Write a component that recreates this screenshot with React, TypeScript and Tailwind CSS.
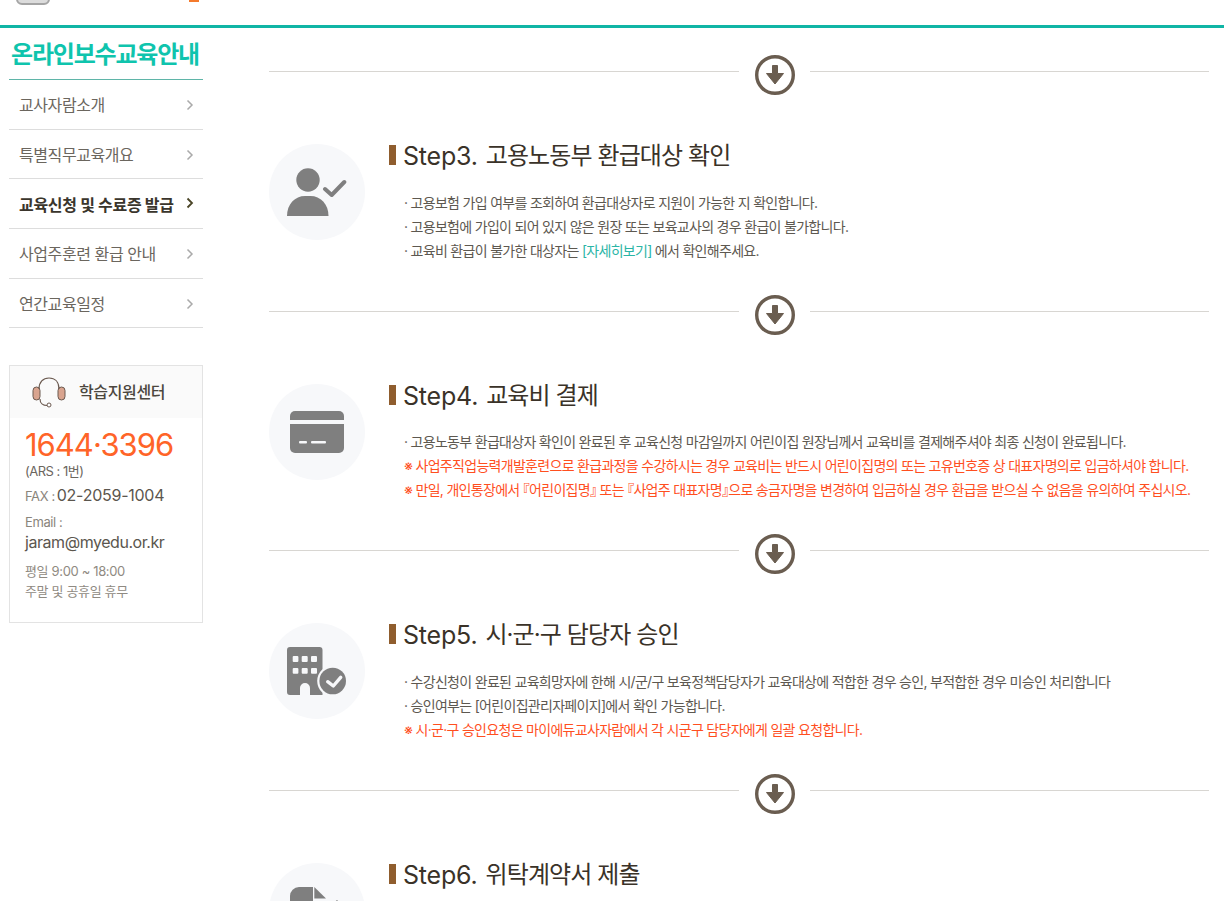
const FONT = "font-['Inter','Noto_Sans_CJK_KR',sans-serif]";

const MENU = [
  { label: '교사자람소개' },
  { label: '특별직무교육개요' },
  { label: '교육신청 및 수료증 발급', active: true },
  { label: '사업주훈련 환급 안내' },
  { label: '연간교육일정' },
];

function Chevron({ active }: { active?: boolean }) {
  return (
    <svg className={active ? 'mb-[3px] h-[12px] w-[8px]' : 'h-[12px] w-[8px]'} viewBox="0 0 8 12" fill="none" stroke={active ? '#4a4426' : '#aaaaaa'} strokeWidth={active ? 1.8 : 1.5}>
      <path d="M1.5 1.500 6 6l-4.500 4.500" />
    </svg>
  );
}

function Sidebar() {
  return (
    <aside className="w-[194px] shrink-0">
      <h2 className="h-[52px] pt-[10px] pr-[2px] text-center text-[24px] leading-[34px] font-bold tracking-[-1.2px] whitespace-nowrap text-[#0fc4ad] border-b border-[#5fb5a8]">
        온라인보수교육안내
      </h2>
      <ul>
        {MENU.map((m) => (
          <li key={m.label} className="flex h-[49.7px] items-center justify-between border-b border-[#dddddd] pt-[2px] pr-[9px] pl-[10px]">
            <span className={m.active ? 'text-[16px] font-bold tracking-[-0.3px] text-[#3a352c]' : 'text-[16px] tracking-[-0.42px] text-[#6b665e]'}>{m.label}</span>
            <Chevron active={m.active} />
          </li>
        ))}
      </ul>
      <div className="mt-[37px] h-[258px] border border-[#e3e3e3]">
        <div className="flex h-[52px] items-center bg-[#fafafa] pl-[22px]">
          <svg className="h-[32px] w-[34px]" viewBox="0 0 34 32" fill="none">
            <rect x="1" y="11" width="7" height="13" rx="3.500" fill="#d9a48f" stroke="#6b5a50" />
            <rect x="26" y="11" width="7" height="13" rx="3.500" fill="#d9a48f" stroke="#6b5a50" />
            <path d="M7 13C7 6 11 2 17 2s10 4 10 11M8 23c0 4 3 6.500 7 6.500" stroke="#6b5a50" strokeWidth="1.200" />
            <circle cx="17" cy="29" r="2" fill="#fff" stroke="#6b5a50" />
          </svg>
          <span className="ml-[13px] text-[16px] font-medium tracking-[-0.35px] text-[#4b463e]">학습지원센터</span>
        </div>
        <div className="pl-[15px]">
          <p className="mt-[10px] text-[31px] leading-[34px] tracking-[-1px] text-[#ff6428]">1644·3396</p>
          <p className="text-[13px] leading-[19px] tracking-[-0.5px] text-[#6b665e]">(ARS : 1번)</p>
          <p className="mt-[2px] flex items-baseline text-[13px] leading-[24px] tracking-[-0.4px] text-[#8a857c]">
            FAX :<span className="ml-[2px] text-[16px] tracking-[-0.25px] text-[#5b564e]">02-2059-1004</span>
          </p>
          <p className="mt-[5px] text-[13px] leading-[19px] tracking-[-0.4px] text-[#8a857c]">Email :</p>
          <p className="text-[16px] leading-[20px] tracking-[-0.45px] text-[#5b564e]">jaram@myedu.or.kr</p>
          <p className="mt-[9px] text-[13px] leading-[20px] tracking-[-0.35px] text-[#8f8a82]">평일 9:00 ~ 18:00</p>
          <p className="text-[13px] leading-[20px] tracking-[-0.35px] text-[#8f8a82]">주말 및 공휴일 휴무</p>
        </div>
      </div>
    </aside>
  );
}

function Divider() {
  return (
    <div className="flex h-[40px] items-start">
      <span className="mt-[16px] h-px w-[470px] bg-[#d8d6d2]" />
      <svg className="mr-[15px] ml-[16px] h-[40px] w-[40px] shrink-0" viewBox="0 0 40 40">
        <circle cx="20" cy="20" r="18.300" fill="#fff" stroke="#6a5d50" strokeWidth="3.400" />
        <path d="M17.500 10.500h5v8h6L20 29 11.500 18.500h6z" fill="#6a5d50" stroke="#6a5d50" strokeWidth="1" strokeLinejoin="round" />
      </svg>
      <span className="mt-[16px] h-px flex-1 bg-[#d8d6d2]" />
    </div>
  );
}

function UserIcon() {
  return (
    <svg className="h-[48px] w-[60px]" viewBox="0 0 60 48" fill="#7f7f7f">
      <circle cx="21" cy="12" r="11.700" />
      <path d="M0 48C0 36 8 28 18 28h5.500C33.500 28 41.500 36 41.500 48z" />
      <path d="M38 21l6.700 6L57.300 14" fill="none" stroke="#7f7f7f" strokeWidth="4" strokeLinecap="round" strokeLinejoin="round" />
    </svg>
  );
}

function CardIcon() {
  return (
    <svg className="h-[42px] w-[54px]" viewBox="0 0 54 42" fill="#7f7f7f">
      <path d="M0 9V5a5 5 0 0 1 5-5h44a5 5 0 0 1 5 5v4z" />
      <path d="M0 13h54v24a5 5 0 0 1-5 5H5a5 5 0 0 1-5-5z" />
      <rect x="9" y="30" width="8" height="2.500" fill="#f7f8fa" rx="1" />
      <rect x="21" y="30" width="15" height="2.500" fill="#f7f8fa" rx="1" />
    </svg>
  );
}

function BuildingIcon() {
  return (
    <svg className="h-[48px] w-[60px]" viewBox="0 0 60 48" fill="#7f7f7f">
      <path d="M3 0h29.500a3 3 0 0 1 3 3v45H23V41a5 5 0 0 0-10 0v7H3a3 3 0 0 1-3-3V3a3 3 0 0 1 3-3z" />
      <g fill="#f7f8fa">
        <rect x="5.700" y="9" width="5.700" height="6" rx="1" /><rect x="14.700" y="9" width="6" height="6" rx="1" /><rect x="24" y="9" width="6" height="6" rx="1" />
        <rect x="5.700" y="21" width="5.700" height="5.700" rx="1" /><rect x="14.700" y="21" width="6" height="5.700" rx="1" /><rect x="24" y="21" width="6" height="5.700" rx="1" />
      </g>
      <circle cx="45.700" cy="34" r="15.500" fill="#f7f8fa" />
      <circle cx="45.700" cy="34" r="13.300" />
      <path d="M40.700 34.700l5.600 4.300 7.400-8.700" fill="none" stroke="#f7f8fa" strokeWidth="3.400" strokeLinecap="round" strokeLinejoin="round" />
    </svg>
  );
}

function DocIcon() {
  return (
    <svg className="h-[48px] w-[60px]" viewBox="0 0 60 48" fill="#7f7f7f">
      <path d="M9 0h14v14h14v34H3a3 3 0 0 1-3-3V9a9 9 0 0 1 9-9z" transform="translate(3 0)" />
      <path d="M27.300 0L39 11.500H27.300z" />
      <path d="M43 19l7-6 5 5-7 7z" />
    </svg>
  );
}

type Line = { text: React.ReactNode; red?: boolean };

function Step({ no, title, icon, lines, tight }: { no: string; title: string; icon: React.ReactNode; lines: Line[]; tight?: boolean }) {
  return (
    <section className="flex h-[199.500px] pt-[49px]">
      <div className="flex h-[96px] w-[96px] shrink-0 items-center justify-center rounded-full bg-[#f7f8fa]">{icon}</div>
      <div className="ml-[24px] min-w-0">
        <h3 className="mt-[1px] flex h-[20px] items-center text-[24px] leading-[30px] whitespace-nowrap text-[#3a3228]">
          <span className="mr-[7px] h-[20px] w-[7px] shrink-0 bg-[#8f5d2e]" />
          <span className="mr-[8px] pt-[2px] text-[25px] tracking-[-0.2px]">{no}</span>
          <span className="pt-[2px] tracking-[-0.9px]">{title}</span>
        </h3>
        <ul className={tight ? 'mt-[25px] pl-[15px]' : 'mt-[26px] pl-[15px]'}>
          {lines.map((l, i) => (
            <li key={i} className={`text-[14px] leading-[24px] tracking-[-0.7px] whitespace-nowrap ${l.red ? 'text-[#ff4f1f]' : 'text-[#5d5850]'}`}>
              {l.text}
            </li>
          ))}
        </ul>
      </div>
    </section>
  );
}

// the reference's corner brackets are half width
function Bracket({ children }: { children: string }) {
  return <span className="font-medium [font-feature-settings:'halt']">{children}</span>;
}

export default function App() {
  return (
    <div className={`h-[901px] w-[1224px] overflow-hidden bg-white ${FONT}`}>
      <header className="relative h-[28px] border-b-[3px] border-[#10b5a5]">
        <span className="absolute top-[-12px] left-[16px] h-[17px] w-[34px] rounded-b-[6px] border-2 border-[#a5a5a5] bg-[#dcdcdc]" />
        <span className="absolute top-0 left-[189px] h-[2px] w-[10px] bg-[#f47a2c]" />
      </header>
      <div className="flex">
        <div className="pl-[9px]">
          <Sidebar />
        </div>
        <main className="ml-[66px] w-[940px] pt-[27px]">
          <Divider />
          <Step
            no="Step3."
            title="고용노동부 환급대상 확인"
            icon={<UserIcon />}
            lines={[
              { text: '· 고용보험 가입 여부를 조회하여 환급대상자로 지원이 가능한 지 확인합니다.' },
              { text: '· 고용보험에 가입이 되어 있지 않은 원장 또는 보육교사의 경우 환급이 불가합니다.' },
              { text: <>· 교육비 환급이 불가한 대상자는 <span className="text-[#2bb5a6]">[자세히보기]</span> 에서 확인해주세요.</> },
            ]}
          />
          <Divider />
          <Step
            no="Step4."
            title="교육비 결제"
            icon={<CardIcon />}
            tight
            lines={[
              { text: '· 고용노동부 환급대상자 확인이 완료된 후 교육신청 마감일까지 어린이집 원장님께서 교육비를 결제해주셔야 최종 신청이 완료됩니다.' },
              { text: '※ 사업주직업능력개발훈련으로 환급과정을 수강하시는 경우 교육비는 반드시 어린이집명의 또는 고유번호증 상 대표자명의로 입금하셔야 합니다.', red: true },
              { text: <>※ 만일, 개인통장에서 <Bracket>『</Bracket>어린이집명<Bracket>』</Bracket> 또는 <Bracket>『</Bracket>사업주 대표자명<Bracket>』</Bracket>으로 송금자명을 변경하여 입금하실 경우 환급을 받으실 수 없음을 유의하여 주십시오.</>, red: true },
            ]}
          />
          <Divider />
          <Step
            no="Step5."
            title="시·군·구 담당자 승인"
            icon={<BuildingIcon />}
            lines={[
              { text: '· 수강신청이 완료된 교육희망자에 한해 시/군/구 보육정책담당자가 교육대상에 적합한 경우 승인, 부적합한 경우 미승인 처리합니다' },
              { text: '· 승인여부는 [어린이집관리자페이지]에서 확인 가능합니다.' },
              { text: '※ 시·군·구 승인요청은 마이에듀교사자람에서 각 시군구 담당자에게 일괄 요청합니다.', red: true },
            ]}
          />
          <Divider />
          <Step no="Step6." title="위탁계약서 제출" icon={<DocIcon />} lines={[]} />
        </main>
      </div>
    </div>
  );
}
